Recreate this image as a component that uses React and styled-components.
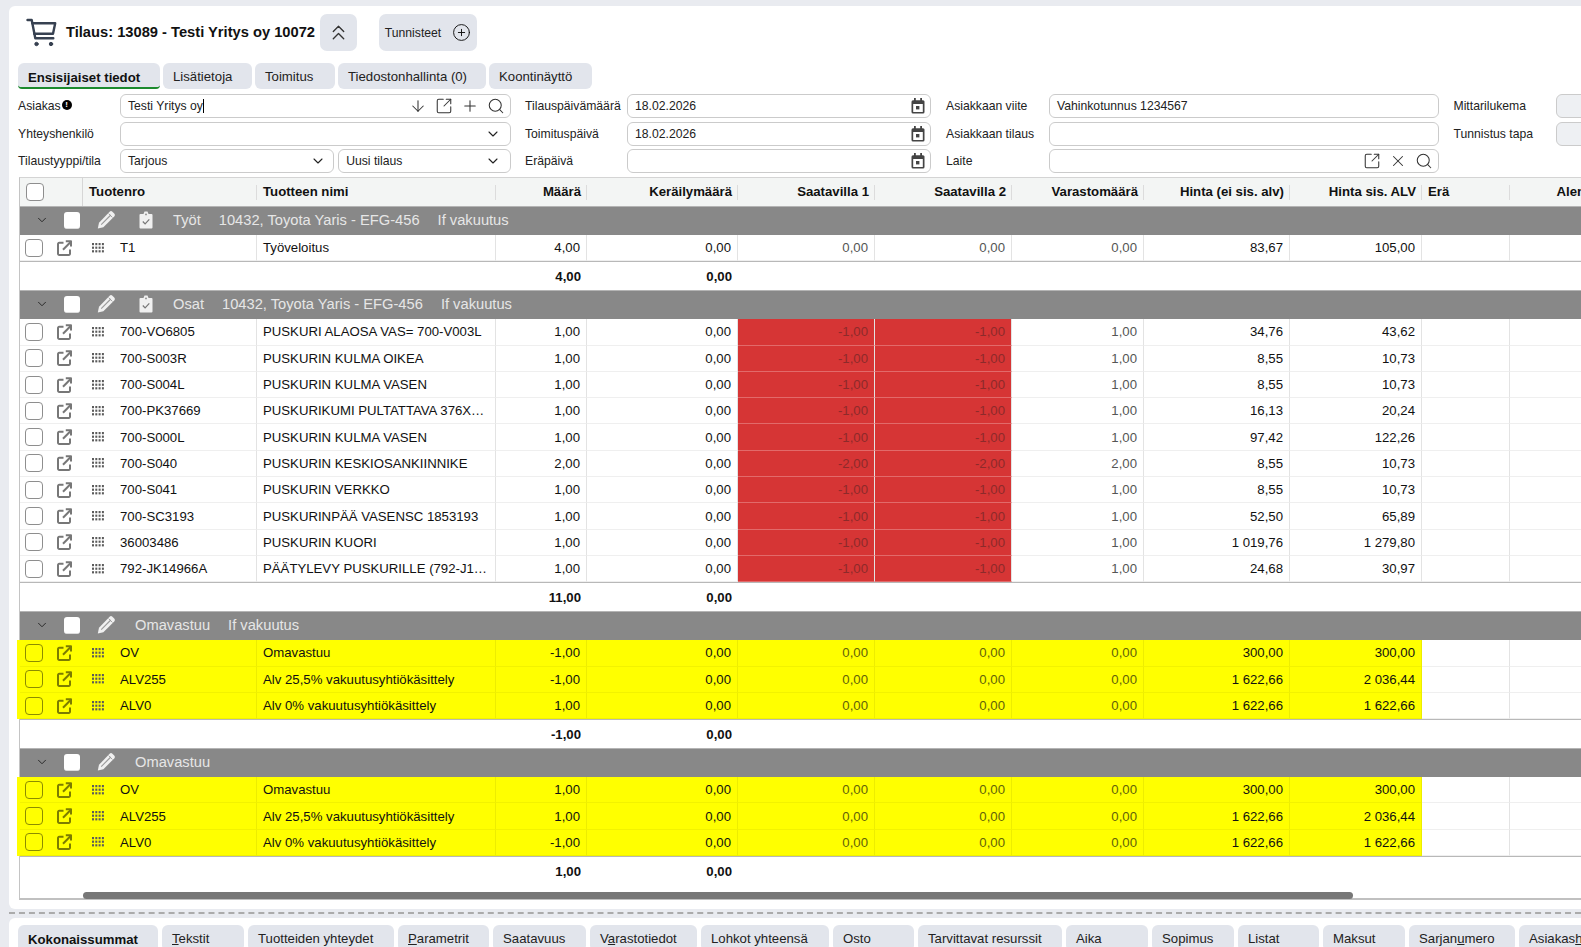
import React from "react";
import styled, { createGlobalStyle } from "styled-components";
import { ArrowDown, ChevronDown, ChevronsUp, CirclePlus, Plus, Search, SquareArrowOutUpRight, X } from "lucide-react";

const GlobalStyle = createGlobalStyle`
  html, body {
    margin: 0;
    height: 100%;
    overflow: hidden;
    background: #e9ebf0;
    font-family: "Liberation Sans", Arial, sans-serif;
    font-size: 13.2px;
    color: #111;
  }
  * { box-sizing: border-box; }
`;

const COLUMNS = "237px 239px 91px 151px 137px 137px 132px 146px 132px 88px 120px";

const Page = styled.div`
  width: 1581px;
  height: 947px;
  overflow: hidden;
  padding: 6px 0 0 9px;
`;

const Panel = styled.div`
  height: 903px;
  background: #fff;
  border-radius: 6px 0 0 6px;
  padding: 8px 0 0 10px;
  overflow: hidden;
`;

const TitleBar = styled.div`
  display: flex;
  align-items: center;
  height: 37px;
  padding-left: 7px;
`;

const Title = styled.h1`
  margin: -2px 5px 0 9px;
  font-size: 14.7px;
  font-weight: 700;
  white-space: nowrap;
`;

const SoftButton = styled.div`
  display: flex;
  align-items: center;
  justify-content: center;
  gap: 11px;
  height: 37px;
  width: ${(p) => p.$w}px;
  margin-right: ${(p) => p.$mr || 0}px;
  background: #e2e5ec;
  border-radius: 7px;
  font-size: 12.2px;
  color: #222;
`;

const TabRow = styled.div`
  display: flex;
  gap: ${(p) => p.$gap}px;
  margin: ${(p) => p.$top}px 0 0 ${(p) => p.$left || 0}px;
`;

const Tab = styled.div`
  flex: none;
  width: ${(p) => p.$w}px;
  height: 26px;
  padding: ${(p) => (p.$active ? "7px" : "6px")} 0 0 10px;
  background: #e2e5ec;
  border-radius: 6px 6px ${(p) => (p.$active ? "4px 4px" : "6px 6px")};
  border-bottom: ${(p) => (p.$active ? "2px solid #1c8a2e" : "none")};
  font-weight: ${(p) => (p.$active ? 700 : 400)};
  font-size: 13.2px;
  color: ${(p) => (p.$active ? "#111" : "#222")};
  white-space: nowrap;
`;

const FormGrid = styled.div`
  display: grid;
  grid-template-columns: 102px 391px 116px 304px 118px 389.5px 117.5px 100px;
  grid-auto-rows: 24px;
  row-gap: 3.5px;
  margin: 5px 0 0 -1px;
`;

const Label = styled.label`
  display: flex;
  align-items: center;
  gap: 1px;
  padding-left: ${(p) => p.$inset || 0}px;
  font-size: 12.2px;
  color: #222;
  white-space: nowrap;
`;

const Field = styled.div`
  display: flex;
  align-items: center;
  flex: ${(p) => (p.$grow ? `${p.$grow} 0 0` : "none")};
  min-width: 0;
  height: 24px;
  padding: 0 7px;
  background: ${(p) => (p.$disabled ? "#eef0f3" : "#fff")};
  border: 1px solid #cbcbcb;
  border-radius: 6px;
  font-size: 12.2px;
  color: #222;
`;

const FieldText = styled.span`
  flex: 1;
  white-space: nowrap;
`;

const Caret = styled.span`
  display: inline-block;
  width: 1px;
  height: 14px;
  background: #000;
  vertical-align: -3px;
`;

const FieldIcons = styled.div`
  display: flex;
  align-items: center;
  gap: 8px;
  margin-right: -2px;
  color: #333;
`;

const CalendarWrap = styled.span`
  display: flex;
  margin-right: -2px;
`;

const SelectChevron = styled(ChevronDown)`
  flex: none;
  margin-right: ${(p) => p.$mr || 0}px;
`;

const SelectPair = styled.div`
  display: flex;
  gap: 4px;
`;

const InfoDot = styled.span`
  display: inline-flex;
  align-items: center;
  justify-content: center;
  width: 10px;
  height: 10px;
  margin-top: -3px;
  border-radius: 50%;
  background: #000;
  color: #fff;
  font-size: 8px;
  font-weight: 700;
  line-height: 1;
`;

const Table = styled.div`
  height: 723px;
  margin-top: 4px;
  border-left: 1px solid #c4c4c4;
  border-top: 1px solid #d4d4d4;
  border-bottom: 2px solid #c0c0c0;
  width: 1720px;
`;

const HeadRow = styled.div`
  display: grid;
  grid-template-columns: ${COLUMNS};
  height: 28px;
  background: #f3f5f4;
`;

const HeadCell = styled.div`
  position: relative;
  display: flex;
  align-items: center;
  justify-content: ${(p) => (p.$right ? "flex-end" : "flex-start")};
  padding: 0 6px 2px 6px;
  font-weight: 700;
  font-size: 13.2px;
  white-space: nowrap;
  overflow: hidden;
  &::after {
    content: "";
    position: absolute;
    right: 0;
    top: 7px;
    bottom: 6px;
    width: 1px;
    background: #dcdcdc;
  }
`;

const HeadStart = styled(HeadCell)`
  padding: 0 0 2px;
`;

const HeadTick = styled.div`
  display: flex;
  align-items: center;
  width: 63px;
  height: 28px;
  margin: 2px 6px 0 0;
  border-right: 1px solid #d6d6d6;
`;

const GroupBar = styled.div`
  display: flex;
  align-items: center;
  height: 29px;
  border-top: 1px solid #b4b4b4;
  padding: 0 0 2px 17px;
  background: #888;
  color: #e6e6e6;
  font-size: 14.7px;
  white-space: nowrap;
`;

const GroupTick = styled.span`
  display: block;
  width: 16px;
  height: 17px;
  margin: 0 17px 0 15px;
  background: #fff;
  border-radius: 3px;
  border-bottom: 1px solid #ddd;
`;

const GroupText = styled.span`
  margin-left: ${(p) => p.$gap}px;
`;

const ClipWrap = styled.span`
  display: flex;
  margin-left: 24px;
`;

const Row = styled.div`
  display: grid;
  grid-template-columns: ${COLUMNS};
  height: 26.3px;
`;

const Cell = styled.div`
  display: flex;
  align-items: center;
  justify-content: ${(p) => (p.$right ? "flex-end" : "flex-start")};
  padding: 0 6px;
  border-right: 1px solid ${(p) => (p.$fill === "yellow" ? "#eded00" : "#e3e3e3")};
  border-bottom: 1px solid ${(p) => (p.$fill === "yellow" ? "#f2f200" : p.$fill === "red" ? "#e26a6a" : "#efefef")};
  background: ${(p) => (p.$fill === "red" ? "#d63535" : p.$fill === "yellow" ? "#ffff00" : "#fff")};
  color: ${(p) => (p.$fill === "red" ? "#8d2a2a" : p.$muted ? (p.$fill === "yellow" ? "#62620a" : "#555") : "#111")};
  font-size: 13.2px;
  white-space: nowrap;
  overflow: hidden;
`;

const StartCell = styled(Cell)`
  padding: 0;
  overflow: visible;
  box-shadow: ${(p) => (p.$fill === "yellow" ? "-3px 0 0 #ffff00" : "none")};
  color: ${(p) => (p.$fill === "yellow" ? "#7c7c00" : "#777")};
`;

const RowTick = styled.span`
  display: block;
  flex: none;
  width: 18px;
  height: 18px;
  margin: 0 14.5px 0 4.5px;
  border: 1.5px solid ${(p) => (p.$tone === "yellow" ? "#8c8c00" : "#8e8e8e")};
  border-radius: 4px;
  background: ${(p) => (p.$tone === "yellow" ? "transparent" : "#fff")};
`;

const HeadBox = styled(RowTick)`
  margin: 0 0 0 6px;
`;

const Code = styled.span`
  margin-left: 15px;
  color: #111;
`;

const GripWrap = styled.span`
  display: flex;
  margin-left: 20px;
`;

const Footer = styled.div`
  display: grid;
  grid-template-columns: ${COLUMNS};
  height: 29px;
  border-top: 1px solid #b8b8b8;
`;

const FooterCell = styled.div`
  display: flex;
  align-items: center;
  justify-content: flex-end;
  padding-right: 6px;
  font-weight: 700;
`;

const ScrollBar = styled.div`
  width: 1270px;
  height: 7px;
  margin: 7px 0 0 63px;
  background: #777;
  border-radius: 4px;
`;

const Splitter = styled.div`
  height: 6px;
  margin-top: 3px;
  border-top: 2px dashed #ababab;
`;

const LowerPanel = styled.div`
  height: 29px;
  background: #fff;
  border-radius: 6px 0 0 0;
  padding: 7px 0 0 9px;
  overflow: hidden;
`;

const CartIcon = () => (
  <svg width="31" height="29" viewBox="0 0 31 29" fill="none" stroke="#374151" strokeWidth="2.4" strokeLinecap="round" strokeLinejoin="round">
    <path d="M1.5 2h4.2l3.6 18.2h18" />
    <path d="M6.3 5.2h22.9l-2.2 10.6H8.2" />
    <circle cx="10.5" cy="26" r="1.7" fill="#374151" strokeWidth="1" />
    <circle cx="25" cy="26" r="1.7" fill="#374151" strokeWidth="1" />
  </svg>
);

const CalendarIcon = () => (
  <svg width="14" height="16" viewBox="0 0 14 16" fill="none">
    <rect x="0.5" y="2.2" width="13" height="13.3" rx="1.5" fill="#444" />
    <rect x="2.2" y="6" width="9.6" height="8" fill="#fff" />
    <rect x="3" y="0" width="1.8" height="3.2" fill="#444" />
    <rect x="9.2" y="0" width="1.8" height="3.2" fill="#444" />
    <rect x="5" y="8" width="3.4" height="3.4" fill="#444" />
  </svg>
);

const OpenIcon = () => (
  <svg width="15" height="16" viewBox="0 0 15 16" fill="none" stroke="currentColor" strokeWidth="2" strokeLinejoin="round">
    <path d="M6.5 2.8H2.2a1.2 1.2 0 0 0-1.2 1.2v9.8a1.2 1.2 0 0 0 1.2 1.2h9.6a1.2 1.2 0 0 0 1.2-1.2V9.5" />
    <path d="M6 9.8L13.4 2.2" />
    <path d="M8.8 1.2h5.2v5.2" />
  </svg>
);

const GripIcon = () => (
  <svg width="13" height="10" viewBox="0 0 13 10" fill="#5b5b5b">
    {[0, 3.6, 7.2].map((y) =>
      [0, 3.3, 6.6, 9.9].map((x) => <rect key={`${x}-${y}`} x={x} y={y} width="2" height="2.2" />)
    )}
  </svg>
);

const PencilIcon = () => (
  <svg width="18" height="18" viewBox="0 0 18 18">
    <path d="M12.6 0.8a2 2 0 0 1 2.8 0l1.8 1.8a2 2 0 0 1 0 2.8L6.4 16.2 0.8 17.6l1.2-5.8z" fill="#f0f0f0" />
    <path d="M4.2 13.6L13.8 4" stroke="#9a9a9a" strokeWidth="1.1" fill="none" />
    <path d="M11.6 2.6l3.8 3.8" stroke="#9a9a9a" strokeWidth="0.9" fill="none" />
  </svg>
);

const ClipIcon = () => (
  <svg width="14" height="18" viewBox="0 0 14 18">
    <path d="M1.5 3h3l1-2.5h3l1 2.5h3a1 1 0 0 1 1 1v12.5a1 1 0 0 1-1 1h-11a1 1 0 0 1-1-1V4a1 1 0 0 1 1-1z" fill="#f0f0f0" />
    <path d="M3.8 10.5l2.3 2.4 4.2-4.6" stroke="#777" strokeWidth="1.2" fill="none" />
    <circle cx="7" cy="3.4" r="0.9" fill="#888" />
  </svg>
);

const TOP_TABS = [
  { w: 142, label: "Ensisijaiset tiedot", active: true },
  { w: 89, label: <>Lisätieto<u>j</u>a</> },
  { w: 80, label: "Toimitus" },
  { w: 148, label: "Tiedostonhallinta (0)" },
  { w: 103, label: "Koontinäyttö" },
];

const BOTTOM_TABS = [
  { w: 140, label: "Kokonaissummat", active: true },
  { w: 82, label: <><u>T</u>ekstit</> },
  { w: 146, label: "Tuotteiden yhteydet" },
  { w: 91, label: <><u>P</u>arametrit</> },
  { w: 93, label: "Saatavuus" },
  { w: 107, label: <>V<u>a</u>rastotiedot</> },
  { w: 128, label: "Lohkot yhteensä" },
  { w: 81, label: "Osto" },
  { w: 144, label: "Tarvittavat resurssit" },
  { w: 82, label: "Aika" },
  { w: 82, label: "Sopimus" },
  { w: 81, label: "Listat" },
  { w: 82, label: "Maksut" },
  { w: 106, label: <>Sarjan<u>u</u>mero</> },
  { w: 120, label: <>Asiakas<u>h</u>istoria</> },
];

const HEADERS = ["Määrä", "Keräilymäärä", "Saatavilla 1", "Saatavilla 2", "Varastomäärä", "Hinta (ei sis. alv)", "Hinta sis. ALV"];

const VEHICLE = "10432, Toyota Yaris - EFG-456";

const BLOCKS = [
  {
    title: ["Työt", VEHICLE, "If vakuutus"],
    clip: true,
    total: ["4,00", "0,00"],
    rows: [["T1", "Työveloitus", "4,00", "0,00", "0,00", "0,00", "0,00", "83,67", "105,00"]],
  },
  {
    title: ["Osat", VEHICLE, "If vakuutus"],
    clip: true,
    tone: "red",
    total: ["11,00", "0,00"],
    rows: [
      ["700-VO6805", "PUSKURI ALAOSA VAS= 700-V003L", "1,00", "0,00", "-1,00", "-1,00", "1,00", "34,76", "43,62"],
      ["700-S003R", "PUSKURIN KULMA OIKEA", "1,00", "0,00", "-1,00", "-1,00", "1,00", "8,55", "10,73"],
      ["700-S004L", "PUSKURIN KULMA VASEN", "1,00", "0,00", "-1,00", "-1,00", "1,00", "8,55", "10,73"],
      ["700-PK37669", "PUSKURIKUMI PULTATTAVA 376X…", "1,00", "0,00", "-1,00", "-1,00", "1,00", "16,13", "20,24"],
      ["700-S000L", "PUSKURIN KULMA VASEN", "1,00", "0,00", "-1,00", "-1,00", "1,00", "97,42", "122,26"],
      ["700-S040", "PUSKURIN KESKIOSANKIINNIKE", "2,00", "0,00", "-2,00", "-2,00", "2,00", "8,55", "10,73"],
      ["700-S041", "PUSKURIN VERKKO", "1,00", "0,00", "-1,00", "-1,00", "1,00", "8,55", "10,73"],
      ["700-SC3193", "PUSKURINPÄÄ VASENSC 1853193", "1,00", "0,00", "-1,00", "-1,00", "1,00", "52,50", "65,89"],
      ["36003486", "PUSKURIN KUORI", "1,00", "0,00", "-1,00", "-1,00", "1,00", "1 019,76", "1 279,80"],
      ["792-JK14966A", "PÄÄTYLEVY PUSKURILLE (792-J1…", "1,00", "0,00", "-1,00", "-1,00", "1,00", "24,68", "30,97"],
    ],
  },
  {
    title: ["Omavastuu", "If vakuutus"],
    tone: "yellow",
    total: ["-1,00", "0,00"],
    rows: [
      ["OV", "Omavastuu", "-1,00", "0,00", "0,00", "0,00", "0,00", "300,00", "300,00"],
      ["ALV255", "Alv 25,5% vakuutusyhtiökäsittely", "-1,00", "0,00", "0,00", "0,00", "0,00", "1 622,66", "2 036,44"],
      ["ALV0", "Alv 0% vakuutusyhtiökäsittely", "1,00", "0,00", "0,00", "0,00", "0,00", "1 622,66", "1 622,66"],
    ],
  },
  {
    title: ["Omavastuu"],
    tone: "yellow",
    total: ["1,00", "0,00"],
    rows: [
      ["OV", "Omavastuu", "1,00", "0,00", "0,00", "0,00", "0,00", "300,00", "300,00"],
      ["ALV255", "Alv 25,5% vakuutusyhtiökäsittely", "1,00", "0,00", "0,00", "0,00", "0,00", "1 622,66", "2 036,44"],
      ["ALV0", "Alv 0% vakuutusyhtiökäsittely", "-1,00", "0,00", "0,00", "0,00", "0,00", "1 622,66", "1 622,66"],
    ],
  },
];

function OrderRow({ row, tone }) {
  const [code, name, ...numbers] = row;
  const fill = tone === "yellow" ? "yellow" : undefined;

  return (
    <Row>
      <StartCell $fill={fill}>
        <RowTick $tone={tone} />
        <OpenIcon />
        <GripWrap>
          <GripIcon />
        </GripWrap>
        <Code>{code}</Code>
      </StartCell>
      <Cell $fill={fill}>{name}</Cell>
      {numbers.map((value, idx) => (
        <Cell
          key={idx}
          $right
          $fill={tone === "red" && (idx === 2 || idx === 3) ? "red" : fill}
          $muted={idx >= 2 && idx <= 4}
        >
          {value}
        </Cell>
      ))}
      <Cell />
      <Cell />
    </Row>
  );
}

function OrderBlock({ block }) {
  return (
    <>
      <GroupBar>
        <ChevronDown size={14} color="#222" strokeWidth={1.6} style={{ marginLeft: -2 }} />
        <GroupTick />
        <PencilIcon />
        {block.clip && (
          <ClipWrap>
            <ClipIcon />
          </ClipWrap>
        )}
        {block.title.map((text, idx) => (
          <GroupText key={text} $gap={idx === 0 ? 20 : 18}>{text}</GroupText>
        ))}
      </GroupBar>
      {block.rows.map((row) => (
        <OrderRow key={row[0]} row={row} tone={block.tone} />
      ))}
      <Footer>
        <span />
        <span />
        <FooterCell>{block.total[0]}</FooterCell>
        <FooterCell>{block.total[1]}</FooterCell>
      </Footer>
    </>
  );
}

export default function App() {
  const icon = { size: 18, strokeWidth: 1.4 };
  const caret = { size: 16, strokeWidth: 1.6, color: "#222" };

  return (
    <Page>
      <GlobalStyle />
      <Panel>
        <TitleBar>
          <CartIcon />
          <Title>Tilaus: 13089 - Testi Yritys oy 10072</Title>
          <SoftButton $w={37} $mr={22}>
            <ChevronsUp size={25} strokeWidth={1.3} color="#333" />
          </SoftButton>
          <SoftButton $w={98}>
            Tunnisteet
            <CirclePlus size={19} strokeWidth={1.2} color="#111" />
          </SoftButton>
        </TitleBar>

        <TabRow $top={12} $gap={3} $left={-1}>
          {TOP_TABS.map((tab, idx) => (
            <Tab key={idx} $w={tab.w} $active={tab.active}>{tab.label}</Tab>
          ))}
        </TabRow>

        <FormGrid>
          <Label>Asiakas<InfoDot>!</InfoDot></Label>
          <Field>
            <FieldText>Testi Yritys oy<Caret /></FieldText>
            <FieldIcons>
              <ArrowDown {...icon} />
              <SquareArrowOutUpRight {...icon} />
              <Plus {...icon} />
              <Search {...icon} />
            </FieldIcons>
          </Field>
          <Label $inset={14}>Tilauspäivämäärä</Label>
          <Field>
            <FieldText>18.02.2026</FieldText>
            <CalendarWrap><CalendarIcon /></CalendarWrap>
          </Field>
          <Label $inset={15}>Asiakkaan viite</Label>
          <Field>
            <FieldText>Vahinkotunnus 1234567</FieldText>
          </Field>
          <Label $inset={15}>Mittarilukema</Label>
          <Field $disabled />

          <Label>Yhteyshenkilö</Label>
          <Field>
            <FieldText />
            <SelectChevron {...caret} $mr={2} />
          </Field>
          <Label $inset={14}>Toimituspäivä</Label>
          <Field>
            <FieldText>18.02.2026</FieldText>
            <CalendarWrap><CalendarIcon /></CalendarWrap>
          </Field>
          <Label $inset={15}>Asiakkaan tilaus</Label>
          <Field />
          <Label $inset={15}>Tunnistus tapa</Label>
          <Field $disabled />

          <Label>Tilaustyyppi/tila</Label>
          <SelectPair>
            <Field $grow={216}>
              <FieldText>Tarjous</FieldText>
              <SelectChevron {...caret} />
            </Field>
            <Field $grow={171}>
              <FieldText>Uusi tilaus</FieldText>
              <SelectChevron {...caret} $mr={2} />
            </Field>
          </SelectPair>
          <Label $inset={14}>Eräpäivä</Label>
          <Field>
            <FieldText />
            <CalendarWrap><CalendarIcon /></CalendarWrap>
          </Field>
          <Label $inset={15}>Laite</Label>
          <Field>
            <FieldText />
            <FieldIcons>
              <SquareArrowOutUpRight {...icon} />
              <X {...icon} />
              <Search {...icon} />
            </FieldIcons>
          </Field>
        </FormGrid>

        <Table>
          <HeadRow>
            <HeadStart>
              <HeadTick>
                <HeadBox />
              </HeadTick>
              Tuotenro
            </HeadStart>
            <HeadCell>Tuotteen nimi</HeadCell>
            {HEADERS.map((text) => (
              <HeadCell key={text} $right>{text}</HeadCell>
            ))}
            <HeadCell>Erä</HeadCell>
            <HeadCell $right>Alennus %</HeadCell>
          </HeadRow>
          {BLOCKS.map((block, idx) => (
            <OrderBlock key={idx} block={block} />
          ))}
          <ScrollBar />
        </Table>
      </Panel>
      <Splitter />
      <LowerPanel>
        <TabRow $top={0} $gap={4}>
          {BOTTOM_TABS.map((tab, idx) => (
            <Tab key={idx} $w={tab.w} $active={tab.active}>{tab.label}</Tab>
          ))}
        </TabRow>
      </LowerPanel>
    </Page>
  );
}
